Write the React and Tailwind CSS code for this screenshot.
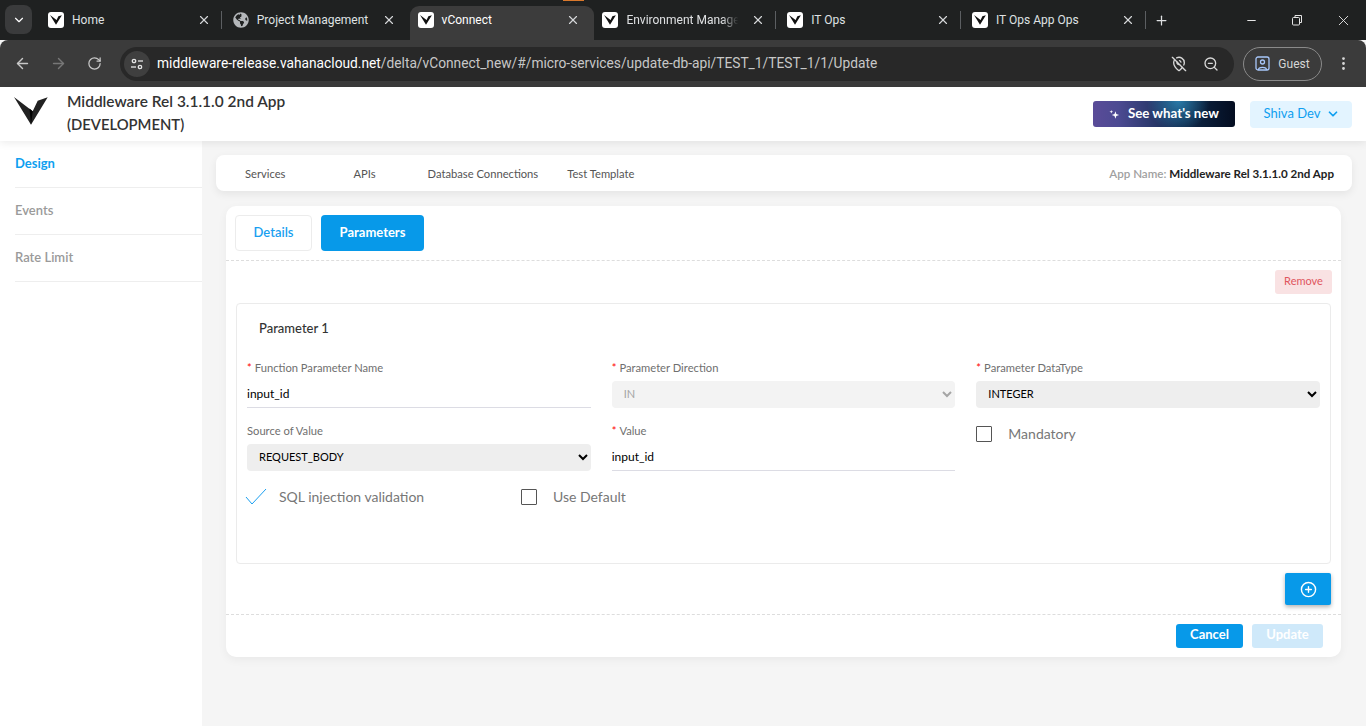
import { ArrowLeft, ArrowRight, RotateCw, ChevronDown, X, Plus, Minus, MapPinOff, ZoomOut, EllipsisVertical, CirclePlus } from 'lucide-react';
import { FaGlobeAmericas } from 'react-icons/fa';

const chromeFont = "font-['Roboto','Noto_Sans',sans-serif]";

function Favicon() {
  return (
    <span className="w-4 h-4 rounded-[3px] bg-white flex items-center justify-center shrink-0">
      <svg width="12" height="10" viewBox="0 0 34 28">
        <path d="M0 0 L18.7 14.3 L23.7 3.7 L33.7 0.3 L17 27.7 Z" fill="#111" />
      </svg>
    </span>
  );
}

function Tab({ title, active, globe, divider, fade }) {
  return (
    <div className={`relative flex items-center w-[184.8px] h-[34px] pb-[6px] pl-2 pr-[14px] gap-2 ${active ? 'bg-[#3c3c3c] rounded-t-[9px]' : ''}`}>
      {globe ? <FaGlobeAmericas size={16} className="text-[#b4b7ba] shrink-0" /> : <Favicon />}
      <span className={`flex-1 text-xs whitespace-nowrap ${active ? 'text-white' : 'text-[#dfe1e3]'} ${fade ? '[mask-image:linear-gradient(90deg,#000_82%,transparent_96%)]' : ''}`}>
        {title}
      </span>
      <X size={14} className="text-[#d5d7d9] shrink-0" />
      {divider && <span className="absolute right-[3px] top-[5px] h-[18px] w-px bg-[#5c5f62]" />}
    </div>
  );
}

function ChromeBar() {
  return (
    <div className={chromeFont}>
      <div className="relative h-[40px] bg-[#1f2121] flex items-end pl-[5px]">
        <span className="absolute left-[563px] top-0 w-[21px] h-px bg-[#d9782c]" />
        <div className="w-[27px] h-[29px] mb-[6px] mr-[8px] rounded-lg bg-[#3a3b3c] flex items-center justify-center text-white">
          <ChevronDown size={14} />
        </div>
        <Tab title="Home" divider />
        <Tab title="Project Management" globe />
        <Tab title="vConnect" active />
        <Tab title="Environment Manage" fade divider />
        <Tab title="IT Ops" divider />
        <Tab title="IT Ops App Ops" divider />
        <div className="h-[34px] pb-[6px] ml-[5px] flex items-center text-[#dfe1e3]"><Plus size={15} /></div>
        <div className="ml-auto h-[40px] flex items-center text-[#e6e6e6]">
          <span className="w-[46px] flex justify-center"><Minus size={13} /></span>
          <span className="w-[46px] flex justify-center">
            <svg width="12" height="12" viewBox="0 0 12 12" fill="none" stroke="currentColor">
              <rect x="1.5" y="3.5" width="7" height="7.5" rx="1" />
              <path d="M4 3.5 V1.5 H10.5 V8.5 H8.5" />
            </svg>
          </span>
          <span className="w-[46px] flex justify-center"><X size={17} strokeWidth={1.3} /></span>
        </div>
      </div>
      <div className="h-[47px] bg-[#3b3b3b] rounded-t-lg flex items-center pl-[10px] pr-[10px]">
        <ArrowLeft size={17} className="text-[#c8c8c8] ml-[4px]" />
        <ArrowRight size={17} className="text-[#777] ml-[19px]" />
        <RotateCw size={15} className="text-[#c8c8c8] ml-[20px]" />
        <div className="ml-[18px] w-[1114px] h-[34px] rounded-full bg-[#282828] flex items-center pl-[4px] pr-[15px]">
          <span className="w-[26px] h-[26px] rounded-full bg-[#3f3f3f] flex items-center justify-center text-[#e6e6e6]">
            <svg width="14" height="14" viewBox="0 0 14 14" fill="none" stroke="currentColor" strokeWidth="1.3">
              <circle cx="4" cy="4" r="1.7" />
              <path d="M8 4 H13" />
              <circle cx="10" cy="10" r="1.7" />
              <path d="M1 10 H6" />
            </svg>
          </span>
          <span className="ml-[7px] text-[13.75px] text-[#c7c7c7] whitespace-nowrap">
            <span className="text-white">middleware-release.vahanacloud.net</span>/delta/vConnect_new/#/micro-services/update-db-api/TEST_1/TEST_1/1/Update
          </span>
          <MapPinOff size={16} className="ml-auto text-[#d8d8d8]" />
          <ZoomOut size={16} className="ml-[16px] text-[#d8d8d8]" />
        </div>
        <div className="ml-[9px] w-[79px] h-[34px] rounded-full border border-[#8a8a8a] flex items-center justify-center gap-[8px]">
          <svg width="15" height="15" viewBox="0 0 15 15" fill="none" stroke="#a8c7fa" strokeWidth="1.3">
            <rect x="1" y="1" width="13" height="13" rx="2" />
            <circle cx="7.5" cy="6" r="2" />
            <path d="M3.5 14 C3.5 10.5 11.5 10.5 11.5 14" />
          </svg>
          <span className="text-xs text-[#d5d5d5]">Guest</span>
        </div>
        <EllipsisVertical size={17} className="ml-[13px] text-[#d8d8d8]" />
      </div>
    </div>
  );
}

function Label({ text, required }) {
  return (
    <div className="text-[11.2px] leading-[14px] text-[#6f6f6f]">
      {required && <span className="text-[#f00] mr-[3px]">*</span>}
      {text}
    </div>
  );
}

function TextField({ label, value }) {
  return (
    <div>
      <Label text={label} required />
      <input
        readOnly
        value={value}
        className="mt-[6px] w-full h-[27px] pb-[2px] border-b border-[#dcdce4] text-xs text-black outline-none bg-transparent"
      />
    </div>
  );
}

function SelectField({ label, value, required, disabled }) {
  return (
    <div>
      <Label text={label} required={required} />
      <select
        disabled={disabled}
        defaultValue={value}
        className={`mt-[6px] w-full h-[27px] rounded-[4px] pl-[8px] pb-[2px] text-[11px] outline-none ${disabled ? 'bg-[#f3f3f3] text-[#a5a5a5] opacity-100' : 'bg-[#eeeeee] text-black'}`}
      >
        <option>{value}</option>
      </select>
    </div>
  );
}

function Check({ label }) {
  return (
    <div className="flex items-center gap-[16px]">
      <span className="w-4 h-4 border border-[#555] rounded-[1px]" />
      <span className="text-sm text-[#777]">{label}</span>
    </div>
  );
}

export default function App() {
  return (
    <div className="h-[726px] overflow-hidden bg-[#f5f5f5] font-['Lato',sans-serif]">
      <ChromeBar />

      {/* App header */}
      <header className="relative z-10 h-[54px] bg-white shadow-[0_2px_8px_rgba(0,0,0,0.08)] flex items-center pl-[14px] pr-[14px]">
        <svg width="34" height="28" viewBox="0 0 34 28" className="shrink-0 -mt-[6px]">
          <path d="M0 0 L18.7 14.3 L23.7 3.7 L33.7 0.3 L17 27.7 Z" fill="#222" />
          <path d="M18.7 14.3 L17 27.7 L15.5 11.6 Z" fill="#000" />
        </svg>
        <div className="ml-[19px] -mt-[3px] font-semibold leading-[23px] text-[#333]">
          <div className="text-[15.45px]">Middleware Rel 3.1.1.0 2nd App</div>
          <div className="text-[14.8px]">(DEVELOPMENT)</div>
        </div>
        <button className="ml-auto w-[142px] h-[26px] rounded-[3px] flex items-center justify-center gap-[8px] text-[13.3px] font-bold text-white bg-[radial-gradient(circle_at_60%_0%,#2a7aa8_0%,transparent_35%),linear-gradient(90deg,#5a4b98_0%,#4c4a92_18%,#0f2a4c_62%,#040d20_100%)]">
          <svg width="11" height="11" viewBox="0 0 12 12" fill="white">
            <path d="M7 2.5 L8 5.5 L11 6.5 L8 7.5 L7 10.5 L6 7.5 L3 6.5 L6 5.5 Z" />
            <path d="M2.5 1 L3 2.5 L4.5 3 L3 3.5 L2.5 5 L2 3.5 L0.5 3 L2 2.5 Z" />
          </svg>
          See what's new
        </button>
        <button className="ml-[15px] w-[102px] h-[27px] pl-[2px] rounded-[4px] bg-[#e3f4ff] text-[#0f9ff0] text-[13px] flex items-center justify-center gap-[6px]">
          Shiva Dev
          <ChevronDown size={14} strokeWidth={3} />
        </button>
      </header>

      <div className="flex h-[585px]">
        {/* Sidebar */}
        <aside className="w-[202px] shrink-0 bg-white pl-[15px] text-[13px] leading-[16px]">
          <div className="h-[47px] pt-[14px] font-bold text-[#0f9ff0] border-b border-[#eeeeee]">Design</div>
          <div className="h-[47px] pt-[14px] font-semibold text-[#9a9a9a] border-b border-[#eeeeee]">Events</div>
          <div className="h-[47px] pt-[14px] font-semibold text-[#9a9a9a] border-b border-[#eeeeee]">Rate Limit</div>
        </aside>

        <main className="flex-1 pl-[14px] pr-[14px] pt-[14px]">
          {/* Top nav */}
          <nav className="h-[36px] pt-[2px] rounded-lg bg-white shadow-[0_3px_8px_rgba(0,0,0,0.07)] flex items-center text-[11.2px] text-[#555]">
            <span className="ml-[29px]">Services</span>
            <span className="ml-[68px]">APIs</span>
            <span className="ml-[52px]">Database Connections</span>
            <span className="ml-[29px]">Test Template</span>
            <span className="ml-auto mr-[18px] text-[11.6px]">
              <span className="text-[#a0a0a0] font-semibold">App Name: </span>
              <span className="text-[#222] font-bold">Middleware Rel 3.1.1.0 2nd App</span>
            </span>
          </nav>

          {/* Main card */}
          <section className="mt-[15px] ml-[10px] mr-[11px] h-[451px] rounded-[10px] bg-white shadow-[0_3px_10px_rgba(0,0,0,0.05)]">
            <div className="h-[55px] pt-[9px] pl-[9px] flex gap-[9px] border-b border-dashed border-[#dddddd] text-[13px] font-semibold">
              <button className="w-[77px] h-[36px] rounded-[4px] border border-[#ececec] text-[#1a9ff0]">Details</button>
              <button className="w-[103px] h-[36px] rounded-[4px] bg-[#0799e9] font-bold text-white">Parameters</button>
            </div>

            <div className="flex justify-end mt-[9px] mr-[9px]">
              <button className="w-[57px] h-[24px] pb-[2px] rounded-[3px] bg-[#f9e2e3] text-[#e0565e] text-[11px]">Remove</button>
            </div>

            <div className="mt-[9px] mx-[10px] h-[261px] rounded-[4px] border border-[#ebebeb] pl-[10px] pr-[10px]">
              <div className="pl-[12px] pt-[16px] text-[13px] font-medium leading-[16px] text-[#333]">Parameter 1</div>
              <div className="mt-[25px] grid grid-cols-3 gap-x-[21px] gap-y-[16px]">
                <TextField label="Function Parameter Name" value="input_id" />
                <SelectField label="Parameter Direction" value="IN" required disabled />
                <SelectField label="Parameter DataType" value="INTEGER" required />
                <SelectField label="Source of Value" value="REQUEST_BODY" />
                <TextField label="Value" value="input_id" />
                <div><Check label="Mandatory" /></div>
              </div>
              <div className="mt-[16px] flex items-center">
                <div className="w-[274px] flex items-center gap-[12px]">
                  <svg width="22" height="18" viewBox="0 0 22 18" fill="none" stroke="#1a9ff0" strokeWidth="1" className="-ml-[2px]">
                    <path d="M1 9 L7 16 L21 1" />
                  </svg>
                  <span className="text-sm text-[#777]">SQL injection validation</span>
                </div>
                <Check label="Use Default" />
              </div>
            </div>

            <div className="flex justify-end mt-[9px] mr-[10px]">
              <button className="w-[46px] h-[32px] rounded-[2px] bg-[#0799e9] shadow-[0_2px_4px_rgba(0,0,0,0.3)] flex items-center justify-center text-white">
                <CirclePlus size={17} />
              </button>
            </div>

            <div className="mt-[9px] h-[43px] border-t border-dashed border-[#dddddd] flex justify-end items-start pt-[9px] pr-[18px] gap-[9px] text-[13px] font-bold text-white">
              <button className="w-[67px] h-[24px] pb-[2px] rounded-[3px] bg-[#0799e9]">Cancel</button>
              <button className="w-[71px] h-[24px] pb-[2px] rounded-[3px] bg-[#cfe9fa]">Update</button>
            </div>
          </section>
        </main>
      </div>
    </div>
  );
}
